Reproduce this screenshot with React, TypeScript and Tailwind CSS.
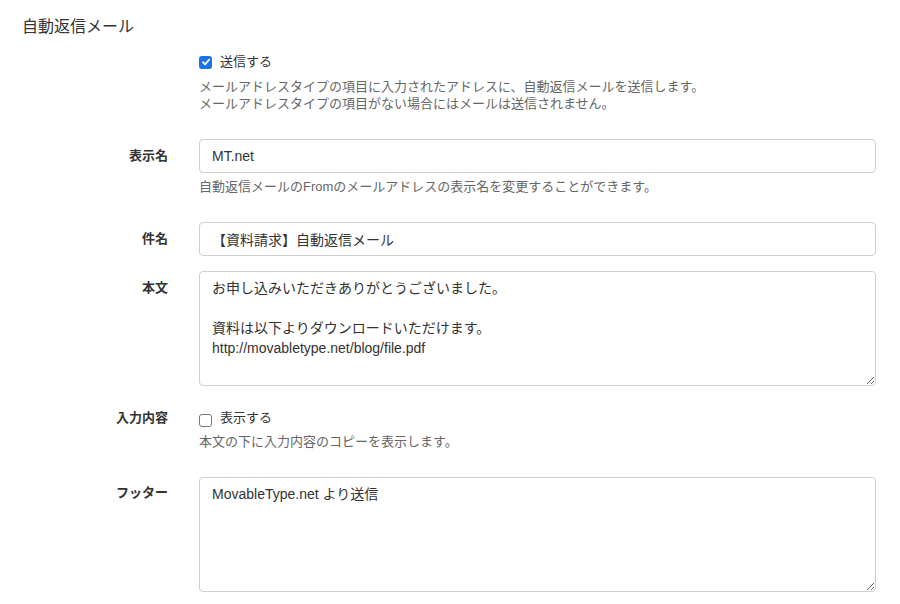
import React from "react";

const FONT = {
  fontFamily: '"Liberation Sans", "Noto Sans CJK JP", sans-serif',
};

function CheckedBox() {
  return (
    <span className="inline-flex h-[13px] w-[13px] items-center justify-center rounded-[3px] bg-[#1a73e8]">
      <svg width="10" height="10" viewBox="0 0 10 10" fill="none">
        <path
          d="M2 5.2 L4.1 7.3 L8.1 2.6"
          stroke="white"
          strokeWidth="1.8"
          strokeLinecap="round"
          strokeLinejoin="round"
        />
      </svg>
    </span>
  );
}

function UncheckedBox() {
  return (
    <span className="inline-block h-[13px] w-[13px] rounded-[3px] border border-[#767676] bg-white" />
  );
}

export default function App() {
  return (
    <div
      className="h-[604px] w-[900px] overflow-hidden bg-white text-[#333333]"
      style={FONT}
    >
      <div className="pl-[22px] pt-[15px] text-[16px] leading-[24px] text-[#333333]">
        自動返信メール
      </div>

      <div className="mt-[13px] grid grid-cols-[168px_677px] gap-x-[31px]">
        {/* 送信する */}
        <div />
        <div>
          <label className="flex h-[20px] items-center gap-[8px] text-[13px] leading-[20px]">
            <CheckedBox />
            <span>送信する</span>
          </label>
          <div className="mt-[6px] text-[13px] leading-[17px] text-[#666666]">
            <div>メールアドレスタイプの項目に入力されたアドレスに、自動返信メールを送信します。</div>
            <div>メールアドレスタイプの項目がない場合にはメールは送信されません。</div>
          </div>
        </div>

        {/* 表示名 */}
        <div className="mt-[27px] flex h-[34px] items-center justify-end text-[13px] font-bold leading-[20px]">
          表示名
        </div>
        <div className="mt-[27px]">
          <input
            type="text"
            defaultValue="MT.net"
            className="block h-[34px] w-full rounded-[4px] border border-[#cfcfcf] bg-white px-[12px] text-[14px] text-[#333333] outline-none"
            style={FONT}
          />
          <div className="mt-[5px] text-[13px] leading-[17px] text-[#666666]">
            自動返信メールのFromのメールアドレスの表示名を変更することができます。
          </div>
        </div>

        {/* 件名 */}
        <div className="mt-[27px] flex h-[34px] items-center justify-end text-[13px] font-bold leading-[20px]">
          件名
        </div>
        <div className="mt-[27px]">
          <input
            type="text"
            defaultValue="【資料請求】自動返信メール"
            className="block h-[34px] w-full rounded-[4px] border border-[#cfcfcf] bg-white px-[12px] text-[14px] text-[#333333] outline-none"
            style={FONT}
          />
        </div>

        {/* 本文 */}
        <div className="mt-[15px] pt-[7px] text-right text-[13px] font-bold leading-[20px]">
          本文
        </div>
        <div className="mt-[15px]">
          <textarea
            defaultValue={
              "お申し込みいただきありがとうございました。\n\n資料は以下よりダウンロードいただけます。\nhttp://movabletype.net/blog/file.pdf"
            }
            className="block h-[115px] w-full rounded-[4px] border border-[#cfcfcf] bg-white px-[12px] py-[6px] text-[14px] leading-[20px] text-[#333333] outline-none"
            style={FONT}
          />
        </div>

        {/* 入力内容 */}
        <div className="mt-[22px] text-right text-[13px] font-bold leading-[20px]">
          入力内容
        </div>
        <div className="mt-[22px]">
          <label className="flex h-[20px] items-center gap-[8px] text-[13px] leading-[20px]">
            <span className="mt-[4px] flex">
              <UncheckedBox />
            </span>
            <span>表示する</span>
          </label>
          <div className="mt-[5px] text-[13px] leading-[17px] text-[#666666]">
            本文の下に入力内容のコピーを表示します。
          </div>
        </div>

        {/* フッター */}
        <div className="mt-[27px] pt-[6px] text-right text-[13px] font-bold leading-[20px]">
          フッター
        </div>
        <div className="mt-[27px]">
          <textarea
            defaultValue={"MovableType.net より送信"}
            className="block h-[115px] w-full rounded-[4px] border border-[#cfcfcf] bg-white px-[12px] py-[6px] text-[14px] leading-[20px] text-[#333333] outline-none"
            style={FONT}
          />
        </div>
      </div>
    </div>
  );
}
